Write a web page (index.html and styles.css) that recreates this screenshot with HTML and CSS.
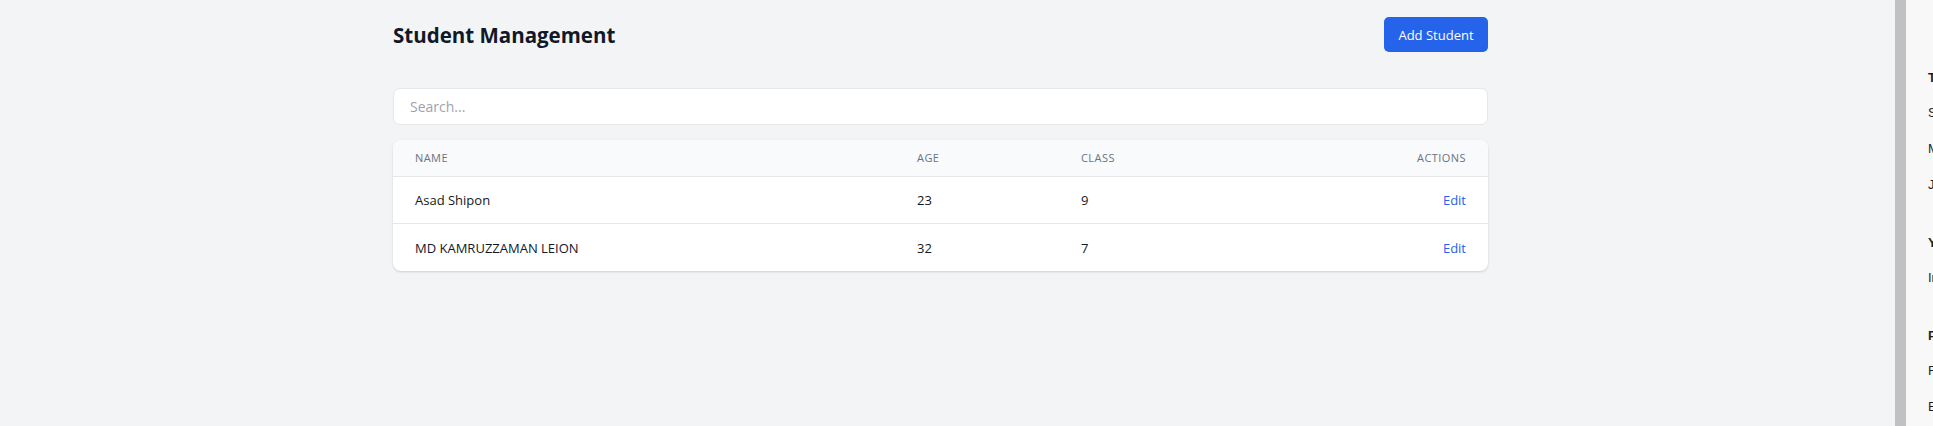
FILE: index.html
```html
<!DOCTYPE html>
<html lang="en">
<head>
<meta charset="utf-8">
<title>Student Management</title>
<link rel="stylesheet" href="styles.css">
</head>
<body>
<div class="layout">
  <main class="main">
    <div class="container">
      <header class="page-header">
        <h1 class="title">Student Management</h1>
        <button class="btn-primary" type="button">Add Student</button>
      </header>
      <input class="search" type="text" placeholder="Search...">
      <div class="card">
        <table class="table">
          <colgroup>
            <col class="col-name">
            <col class="col-age">
            <col class="col-class">
            <col class="col-actions">
          </colgroup>
          <thead>
            <tr>
              <th>Name</th>
              <th>Age</th>
              <th>Class</th>
              <th class="right">Actions</th>
            </tr>
          </thead>
          <tbody>
            <tr>
              <td>Asad Shipon</td>
              <td>23</td>
              <td>9</td>
              <td class="right"><a class="link" href="#">Edit</a></td>
            </tr>
            <tr>
              <td>MD KAMRUZZAMAN LEION</td>
              <td>32</td>
              <td>7</td>
              <td class="right"><a class="link" href="#">Edit</a></td>
            </tr>
          </tbody>
        </table>
      </div>
    </div>
  </main>
  <div class="divider"></div>
  <aside class="side-panel">
    <div class="side-group">
      <div class="side-heading">Today</div>
      <div class="side-item">Student records</div>
      <div class="side-item">Manage classes</div>
      <div class="side-item">JavaScript notes</div>
    </div>
    <div class="side-group">
      <div class="side-heading">Yesterday</div>
      <div class="side-item">Index page</div>
    </div>
    <div class="side-group">
      <div class="side-heading">Previous 7 days</div>
      <div class="side-item">Routing setup</div>
      <div class="side-item">Edit form</div>
    </div>
  </aside>
</div>
</body>
</html>
```

FILE: styles.css
```css
* {
  box-sizing: border-box;
}

html, body {
  margin: 0;
  padding: 0;
  height: 100%;
}

body {
  font-family: "Open Sans", "Noto Sans", sans-serif;
  color: #111827;
  background: #f3f4f6;
  overflow: hidden;
}

.layout {
  display: flex;
  height: 426px;
  width: 1933px;
}

.main {
  flex: 0 0 1895px;
  padding-right: 14px;
  background: #f3f4f6;
}

.container {
  width: 1095px;
  margin: 0 auto;
  padding-top: 17px;
}

.page-header {
  display: flex;
  align-items: center;
  justify-content: space-between;
  margin-bottom: 36px;
}

.title {
  margin: 0;
  font-size: 20.5px;
  font-weight: 700;
  line-height: 28px;
  color: #111827;
}

.btn-primary {
  height: 35px;
  width: 104px;
  padding: 0;
  border: none;
  border-radius: 5px;
  background: #2563eb;
  color: #ffffff;
  font-family: inherit;
  font-size: 13px;
  font-weight: 500;
}

.search {
  display: block;
  width: 100%;
  height: 37px;
  margin: 0 0 15px;
  padding: 0 16px;
  border: 1px solid #e5e7eb;
  border-radius: 7px;
  background: #ffffff;
  font-family: inherit;
  font-size: 14px;
  color: #111827;
  outline: none;
}

.search::placeholder {
  color: #9ca3af;
}

.card {
  background: #ffffff;
  border-radius: 8px;
  box-shadow: 0 1px 3px rgba(0, 0, 0, 0.1), 0 1px 2px rgba(0, 0, 0, 0.06);
  overflow: hidden;
}

.table {
  width: 100%;
  border-collapse: collapse;
  table-layout: fixed;
}

.col-name { width: 502px; }
.col-age { width: 164px; }
.col-class { width: 164px; }

.table th {
  height: 36px;
  padding: 0 22px;
  background: #f9fafb;
  border-bottom: 1px solid #e5e7eb;
  text-align: left;
  font-size: 11px;
  font-weight: 500;
  letter-spacing: 0.04em;
  text-transform: uppercase;
  color: #6b7280;
}

.table td {
  height: 47.5px;
  padding: 1px 22px 0;
  font-size: 13px;
  color: #111827;
}

.table tbody tr + tr td {
  border-top: 1px solid #e5e7eb;
}

.table .right {
  text-align: right;
}

.link {
  color: #2563eb;
  text-decoration: none;
  font-weight: 500;
}

.divider {
  flex: 0 0 11px;
  background: #c1c1c1;
}

.side-panel {
  flex: 1 1 auto;
  display: flex;
  flex-direction: column;
  gap: 38px;
  background: #f8f8f8;
  padding: 68px 0 0 22px;
  overflow: hidden;
  white-space: nowrap;
  font-family: "Liberation Sans", Arial, sans-serif;
  font-size: 13px;
  color: #1f1f1f;
}

.side-group {
  display: flex;
  flex-direction: column;
  gap: 16px;
}

.side-heading {
  height: 20px;
  line-height: 20px;
  font-weight: 700;
  margin-bottom: -1px;
}

.side-item {
  height: 20px;
  line-height: 20px;
}
```
